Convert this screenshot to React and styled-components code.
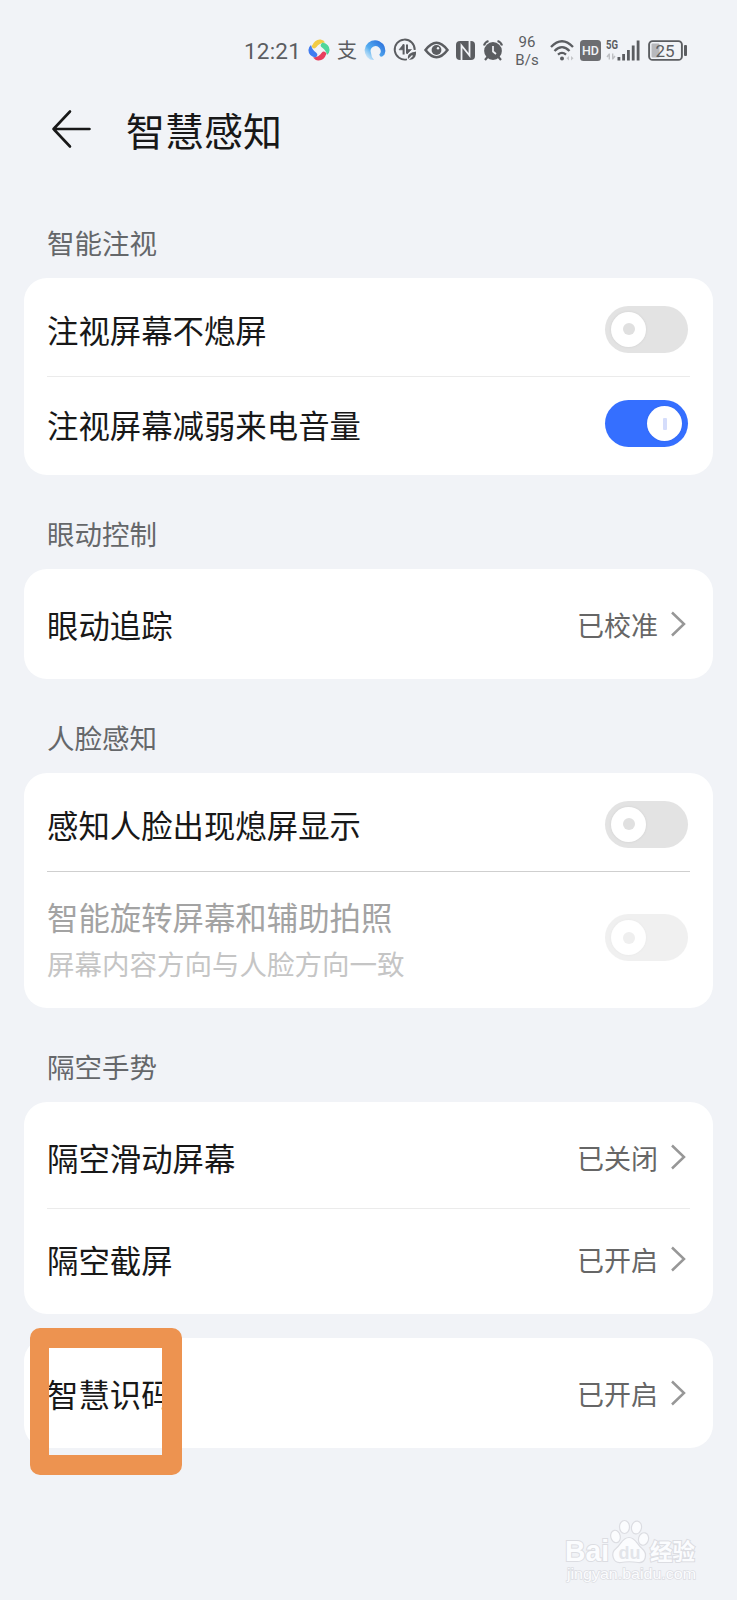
import React from "react";
import styled, { createGlobalStyle } from "styled-components";

const GlobalStyle = createGlobalStyle`
  * { box-sizing: border-box; }
  body {
    margin: 0;
    background: #f1f3f7;
    font-family: "Noto Sans CJK SC", sans-serif;
  }
`;

const Screen = styled.main`
  position: relative;
  width: 737px;
  height: 1600px;
  overflow: hidden;
  background: #f1f3f7;
  color: #181818;
`;

const StatusBar = styled.div`
  display: flex;
  align-items: center;
  height: 100px;
  padding-left: 244px;
  color: #5b5d61;
  font-family: Roboto, sans-serif;
`;

const Clock = styled.span`
  width: 64px;
  padding-top: 1px;
  font-size: 22.5px;
  line-height: 24px;
  letter-spacing: 0.2px;
  white-space: nowrap;
`;

const Icon = styled.svg`
  display: block;
  flex: none;
  margin-right: ${(p) => p.$gap || 0}px;
  overflow: visible;
`;

const AlipayMark = styled.span`
  width: 21px;
  margin-right: 6px;
  font: 400 20px/22px "Noto Sans CJK SC", sans-serif;
`;

const NetSpeed = styled.span`
  width: 24px;
  margin: 2px 11px 0 1px;
  font-size: 15px;
  line-height: 18px;
  text-align: center;
  white-space: nowrap;
`;

const Header = styled.header`
  display: flex;
  align-items: flex-start;
  height: 58px;
  padding-left: 52px;
`;

const BackArrow = styled(Icon)`
  margin-top: 10px;
`;

const Title = styled.h1`
  margin: 1px 0 0 35px;
  font-size: 39px;
  line-height: 56px;
  font-weight: 400;
`;

const SectionTitle = styled.h2`
  margin: 0;
  padding: ${(p) => p.$top}px 47px 0;
  height: ${(p) => p.$height}px;
  font-size: 27.5px;
  line-height: 40px;
  font-weight: 400;
  color: #65676a;
`;

const Card = styled.section`
  margin: ${(p) => p.$top || 0}px 24px 0;
  border-radius: 23px;
  background: #fff;
`;

const rowPadding = {
  first: "4px 25px 0 23px",
  last: "0 25px 5px 23px",
  only: "0 25px 0 23px",
};

const Row = styled.div`
  display: flex;
  align-items: center;
  justify-content: space-between;
  height: ${(p) => p.$height}px;
  padding: ${(p) => rowPadding[p.$place || "only"]};
`;

const Divider = styled.div`
  height: 1px;
  margin: 0 23px;
  background: ${(p) => (p.$strong ? "#cfcfcf" : "#ebebeb")};
`;

const Labels = styled.div`
  display: flex;
  flex-direction: column;
  padding-top: 3px;
`;

const Label = styled.span`
  padding-top: 2px;
  font-size: 31.4px;
  line-height: 46px;
  color: ${(p) => (p.$disabled ? "#a3a3a3" : "#181818")};
`;

const Hint = styled.span`
  font-size: 27.5px;
  line-height: 46px;
  color: #c5c5c5;
`;

const Value = styled.span`
  display: flex;
  align-items: center;
  gap: 13px;
  padding-right: 3px;
  font-size: 27px;
  line-height: 40px;
  color: #666;
`;

const ValueText = styled.span`
  padding-top: 2px;
`;

const Track = styled.span`
  display: flex;
  align-items: center;
  justify-content: ${(p) => (p.$on ? "flex-end" : "flex-start")};
  width: 83px;
  height: 47px;
  padding: 0 6px;
  border-radius: 24px;
  background: ${(p) => (p.$on ? "#356fff" : "#e3e3e3")};
  opacity: ${(p) => (p.$disabled ? 0.5 : 1)};
`;

const Knob = styled.span`
  display: flex;
  align-items: center;
  justify-content: center;
  width: 35px;
  height: 35px;
  border-radius: 50%;
  background: #fff;
  box-shadow: 0 0 3px rgba(0, 0, 0, 0.08);

  &::after {
    content: "";
    width: ${(p) => (p.$on ? 4 : 12)}px;
    height: 12px;
    border-radius: ${(p) => (p.$on ? 1 : 6)}px;
    background: ${(p) => (p.$on ? "#d5ddfb" : "#e0e0e0")};
  }
`;

const Highlight = styled.div`
  position: absolute;
  left: 30px;
  top: 1328px;
  width: 152px;
  height: 147px;
  border: 20px solid #ed9350;
  border-width: 20px 20px 20px 19px;
  border-radius: 10px;
`;

const Watermark = styled.div`
  position: absolute;
  left: 565px;
  top: 1518px;
`;

function Toggle({ on, disabled }) {
  return (
    <Track $on={on} $disabled={disabled}>
      <Knob $on={on} />
    </Track>
  );
}

function Chevron() {
  return (
    <Icon width="14" height="24" viewBox="0 0 14 24" fill="none" stroke="#979797" strokeWidth="2.5">
      <path d="M1 .5L13 12L1 23.500" />
    </Icon>
  );
}

function LinkRow({ label, value, height, place }) {
  return (
    <Row $height={height} $place={place}>
      <Label>{label}</Label>
      <Value>
        <ValueText>{value}</ValueText>
        <Chevron />
      </Value>
    </Row>
  );
}

function StatusIcons() {
  return (
    <>
      <Icon $gap={7} width="22" height="22" viewBox="0 0 22 22">
        <path d="M3.500 7.500Q7 0 12.500 .5Q16 1 17 3.500Q11 4 8.500 8Q6 11 3.500 7.500Z" fill="#f2cb45" />
        <path d="M14.500 3.500Q21.500 5 21.600 11Q21.500 14 19 16Q18 11 14 8.500Q11 6.500 14.500 3.500Z" fill="#4fd69a" />
        <path d="M18.500 14.500Q16 22 10 21.500Q7 21 5 18.500Q11 18 13.500 14Q16 11 18.500 14.500Z" fill="#e83f5d" />
        <path d="M7.500 18.500Q.5 17 .4 11Q.5 8 3 6Q4 11 8 13.500Q11 16 7.500 18.500Z" fill="#417cf0" />
      </Icon>
      <AlipayMark>支</AlipayMark>
      <Icon $gap={8} width="22" height="21" viewBox="0 0 22 21">
        <defs>
          <linearGradient id="ring" x1="0" y1="1" x2="1" y2="0">
            <stop offset="0" stopColor="#a9dcfb" stopOpacity="0.2" />
            <stop offset="0.4" stopColor="#56aef0" />
            <stop offset="1" stopColor="#2464d8" />
          </linearGradient>
        </defs>
        <path d="M6 19.500A10.300 10.300 0 1 1 20.500 14.500Q16.500 19 15.300 14.500A5 5 0 1 0 7 13Q7 16.500 10 20Z" fill="url(#ring)" />
      </Icon>
      <Icon $gap={7} width="23" height="22" viewBox="0 0 23 22" fill="none" stroke="currentColor" strokeWidth="1.900">
        <path d="M13 20.300A10 10 0 1 1 20.700 11" />
        <path d="M9.600 5.500V15.500M13 5.500V14.500" strokeWidth="2" />
        <path d="M9.600 5L5 10.800H9.600ZM13 15V10.500H17.500Z" fill="currentColor" strokeWidth=".6" />
        <path d="M14 20.500C13 14.500 17 13.500 22 12.500C22.500 18.500 19 21.500 14 20.500Z" fill="currentColor" stroke="none" />
        <path d="M13 22L18.500 16.500" stroke="#f1f3f7" strokeWidth="1.200" />
      </Icon>
      <Icon $gap={7} width="25" height="18" viewBox="0 0 25 18">
        <path d="M1.500 9Q12.500-5.500 23.500 9Q12.500 23.500 1.500 9Z" fill="none" stroke="currentColor" strokeWidth="2.500" />
        <circle cx="12.500" cy="9" r="4.900" fill="currentColor" />
        <circle cx="14" cy="7.300" r="1.200" fill="#f1f3f7" />
      </Icon>
      <Icon $gap={8} width="19" height="19" viewBox="0 0 19 19">
        <rect width="19" height="19" rx="4" fill="currentColor" />
        <path d="M5.500 19V4.500L13.500 14.500V0" fill="none" stroke="#f1f3f7" strokeWidth="1.800" />
      </Icon>
      <Icon $gap={11} width="20" height="21" viewBox="0 0 20 21">
        <circle cx="10" cy="11" r="8.900" fill="currentColor" />
        <path d="M1 5.500Q2 2 5.500 1M19 5.500Q18 2 14.500 1M4.500 17L2 20M15.500 17L18 20" fill="none" stroke="currentColor" strokeWidth="2.200" />
        <path d="M10 6V11.500L13 14" fill="none" stroke="#f1f3f7" strokeWidth="1.700" />
      </Icon>
      <NetSpeed>
        96
        <br />
        B/s
      </NetSpeed>
      <Icon $gap={6} width="24" height="21" viewBox="0 0 24 21" fill="none" stroke="currentColor" strokeWidth="2.300">
        <path d="M1 7Q12-4.500 23 7M4.500 11Q12 3.300 19.500 11M8 14.700Q12 11 16 14.700" />
        <circle cx="12" cy="18.500" r="2" fill="currentColor" stroke="none" />
        <path d="M19 16V20.500L16.500 18.300ZM21 16V20.500L23.500 18.300Z" fill="#c5c6c9" stroke="none" />
      </Icon>
      <Icon $gap={5} width="21" height="21" viewBox="0 0 21 21">
        <rect width="21" height="21" rx="3.500" fill="#6c6d71" />
        <text x="10.500" y="15.300" textAnchor="middle" fontSize="13.500" fontWeight="500" fill="#f1f3f7" textLength="17" lengthAdjust="spacingAndGlyphs">HD</text>
      </Icon>
      <Icon $gap={8} width="34" height="21" viewBox="0 0 34 21" fill="currentColor">
        <text x="0" y="9" fontSize="12" fontWeight="700" textLength="12" lengthAdjust="spacingAndGlyphs">5G</text>
        <path d="M3.300 13.500V19.500M3.300 14L1 17M6.700 13.500V19.500M6.700 19L9 16" stroke="#bfc0c4" strokeWidth="1.400" />
        <path d="M11.500 17H14.300V20.500H11.500ZM16.200 14H19V20.500H16.200ZM21 10H23.800V20.500H21ZM25.800 5.500H28.600V20.500H25.800ZM30.700 .5H33.500V20.500H30.700Z" />
      </Icon>
      <Icon width="40" height="21" viewBox="0 0 40 21">
        <rect x="1.100" y="1.100" width="32.800" height="18.800" rx="3.500" fill="none" stroke="currentColor" strokeWidth="1.900" />
        <rect x="3.500" y="3.500" width="8" height="14" rx="1" fill="#b7b8bc" />
        <rect x="36" y="5" width="3" height="11" rx="1" fill="currentColor" />
        <text x="17" y="16.500" textAnchor="middle" fontSize="17" fill="currentColor">25</text>
      </Icon>
    </>
  );
}

function BaiduMark() {
  return (
    <Icon width="134" height="68" viewBox="0 0 134 68" fill="#fbfcfe" stroke="#dcdde2" strokeWidth="1.200" fontFamily="Liberation Sans, sans-serif">
      <g fontWeight="700" paintOrder="stroke" strokeWidth="2">
        <text x="0" y="43" fontSize="30" textLength="44" lengthAdjust="spacingAndGlyphs">Bai</text>
        <text x="85" y="42" fontSize="22.500" textLength="45" lengthAdjust="spacingAndGlyphs" fontFamily="Noto Sans CJK SC, sans-serif">经验</text>
      </g>
      <path d="M64 19.500C57 19.500 56 27 51 30.500C45 35 48 45.500 56 44.500C61 43.500 67 43.500 73 44.500C81 45.500 83 35.500 77 30.500C72 27 71 19.500 64 19.500Z" />
      <ellipse cx="50.500" cy="18.500" rx="4.800" ry="6.300" transform="rotate(-12 50.500 18.500)" />
      <ellipse cx="59.500" cy="9" rx="5" ry="6.500" />
      <ellipse cx="71.500" cy="9.500" rx="5" ry="6.500" transform="rotate(10 71.500 9.500)" />
      <ellipse cx="78.500" cy="21" rx="5" ry="6.300" transform="rotate(15 78.500 21)" />
      <text x="53.500" y="41" fontSize="19" fontWeight="700" fill="#e3e5ea" stroke="none" textLength="22" lengthAdjust="spacingAndGlyphs">du</text>
      <text x="2" y="61" fontSize="14.500" paintOrder="stroke" strokeWidth="1.300" textLength="129" lengthAdjust="spacingAndGlyphs">jingyan.baidu.com</text>
    </Icon>
  );
}

export default function App() {
  return (
    <Screen>
      <GlobalStyle />
      <StatusBar>
        <Clock>12:21</Clock>
        <StatusIcons />
      </StatusBar>

      <Header>
        <BackArrow width="39" height="38" viewBox="0 0 39 38" fill="none" stroke="#181818" strokeWidth="2.600" strokeLinecap="round" strokeLinejoin="round">
          <path d="M18 1.500L1.500 19L18 36.500M1.500 19H37.500" />
        </BackArrow>
        <Title>智慧感知</Title>
      </Header>

      <SectionTitle $top={64} $height={120}>智能注视</SectionTitle>
      <Card>
        <Row $height={98} $place="first">
          <Label>注视屏幕不熄屏</Label>
          <Toggle />
        </Row>
        <Divider />
        <Row $height={98} $place="last">
          <Label>注视屏幕减弱来电音量</Label>
          <Toggle on />
        </Row>
      </Card>

      <SectionTitle $top={38} $height={94}>眼动控制</SectionTitle>
      <Card>
        <LinkRow height={110} label="眼动追踪" value="已校准" />
      </Card>

      <SectionTitle $top={38} $height={94}>人脸感知</SectionTitle>
      <Card>
        <Row $height={98} $place="first">
          <Label>感知人脸出现熄屏显示</Label>
          <Toggle />
        </Row>
        <Divider $strong />
        <Row $height={136} $place="last">
          <Labels>
            <Label $disabled>智能旋转屏幕和辅助拍照</Label>
            <Hint>屏幕内容方向与人脸方向一致</Hint>
          </Labels>
          <Toggle disabled />
        </Row>
      </Card>

      <SectionTitle $top={38} $height={94}>隔空手势</SectionTitle>
      <Card>
        <LinkRow height={106} place="first" label="隔空滑动屏幕" value="已关闭" />
        <Divider />
        <LinkRow height={105} place="last" label="隔空截屏" value="已开启" />
      </Card>

      <Card $top={24}>
        <LinkRow height={110} label="智慧识码" value="已开启" />
      </Card>

      <Highlight />
      <Watermark>
        <BaiduMark />
      </Watermark>
    </Screen>
  );
}
